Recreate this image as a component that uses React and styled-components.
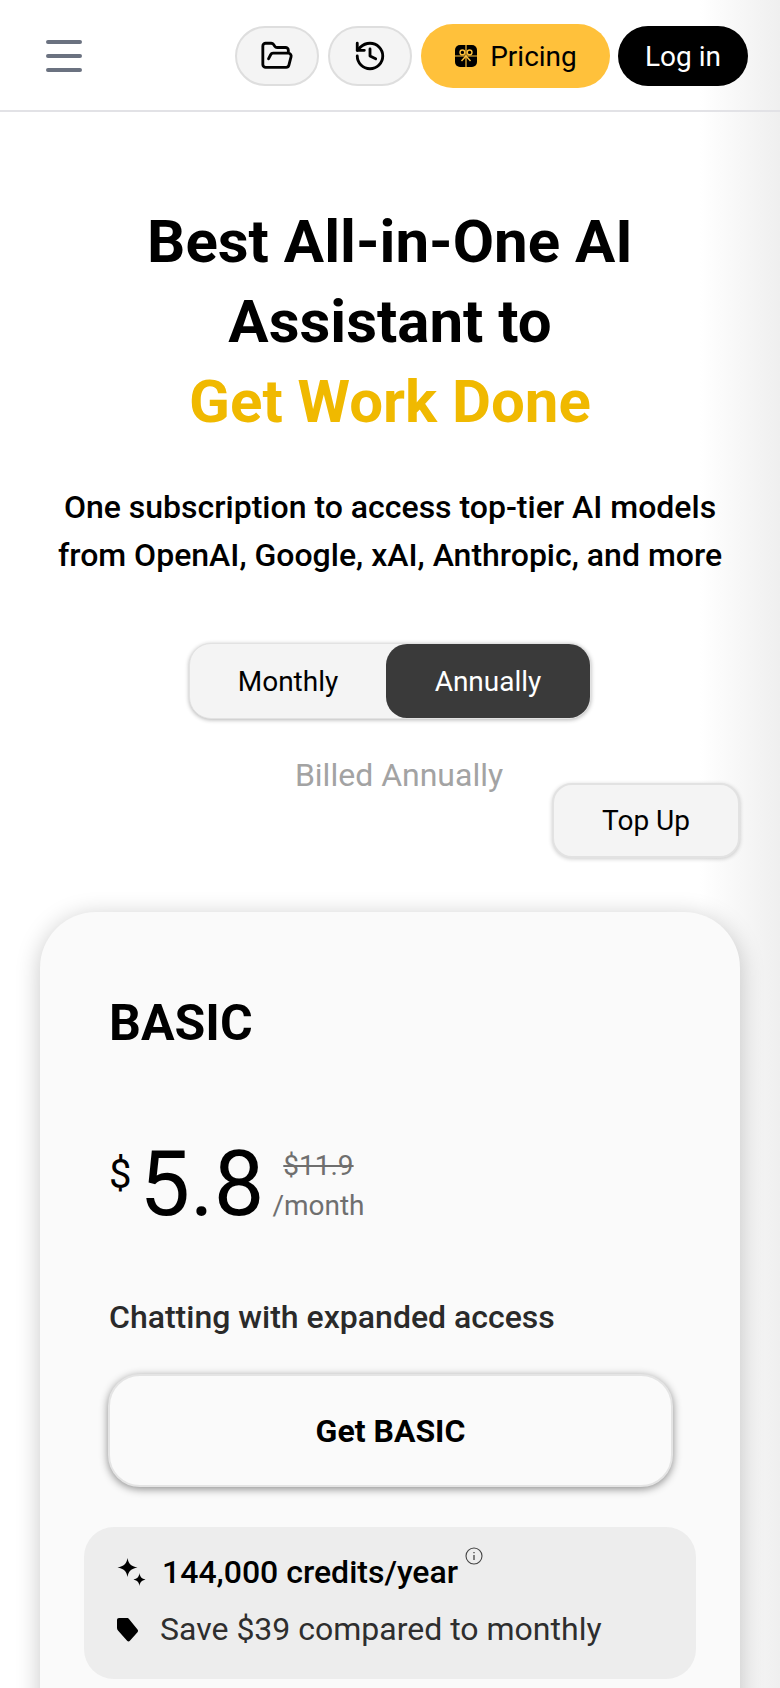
import React from "react";
import styled, { createGlobalStyle } from "styled-components";
import { FolderOpen, History } from "lucide-react";

const GlobalStyle = createGlobalStyle`
  * { box-sizing: border-box; }
  html, body { margin: 0; padding: 0; background: #fff; }
  body { font-family: Roboto, "Liberation Sans", sans-serif; color: #000; }
`;

function MenuIcon() {
  return (
    <svg width="36" height="32" viewBox="0 0 36 32" stroke="#6b7280" strokeWidth="4" strokeLinecap="round">
      <path d="M2 2h32M2 16h32M2 30h32" />
    </svg>
  );
}

function GiftIcon() {
  return (
    <svg width="24" height="24" viewBox="0 0 24 24">
      <rect x="1" y="1" width="22" height="22" rx="5" fill="#000" />
      <path d="M0 12h24M12 0v24" stroke="#ffc13b" strokeWidth="1.2" fill="none" />
      <circle cx="8.4" cy="8.4" r="2.400" fill="#000" stroke="#ffc13b" strokeWidth="1.4" />
      <circle cx="15.6" cy="8.4" r="2.400" fill="#000" stroke="#ffc13b" strokeWidth="1.4" />
      <path d="M12 12l-4.500 5M12 12l4.500 5" stroke="#ffc13b" strokeWidth="1.4" fill="none" />
    </svg>
  );
}

function SparkIcon() {
  return (
    <svg width="30" height="28" viewBox="0 0 30 28" fill="#000">
      <path d="M11.500 0c1 6 3.500 8.200 10 9.500c-6.500 1.300-9 3.500-10 9.500c-1-6-3.500-8.200-10-9.500C8 8.200 10.500 6 11.500 0z" />
      <path d="M23.500 15c.6 4 2 5.500 6 6.500c-4 1-5.400 2.500-6 6.500c-.6-4-2-5.500-6-6.500c4-1 5.400-2.500 6-6.500z" />
    </svg>
  );
}

function TagIcon() {
  return (
    <svg width="24" height="25" viewBox="0 0 24 25" fill="#000">
      <path d="M3 1h8c1 0 1.600.4 2.200 1.200l8.500 10.500c.5.7.5 1.500 0 2.200l-7.800 8.900c-.8.900-2 .9-2.800 0L2.200 13.700C1.500 12.900 1 12 1 11V3c0-1.200.8-2 2-2z" />
    </svg>
  );
}

function InfoIcon() {
  return (
    <svg width="18" height="18" viewBox="0 0 18 18" fill="none" stroke="#444">
      <circle cx="9" cy="9" r="8" strokeWidth="1.100" />
      <path d="M9 8v5M9 5v1.200" strokeWidth="1.300" />
    </svg>
  );
}

function App() {
  return (
    <Page>
      <GlobalStyle />
      <Header>
        <MenuIcon />
        <HeaderActions>
          <IconPill>
            <FolderOpen size={34} strokeWidth={2} />
          </IconPill>
          <IconPill>
            <History size={34} strokeWidth={2} />
          </IconPill>
          <PricingPill>
            <GiftIcon />
            Pricing
          </PricingPill>
          <LoginPill>Log in</LoginPill>
        </HeaderActions>
      </Header>

      <Hero>
        <Title>
          Best All-in-One AI
          <br />
          Assistant to
          <br />
          <Accent>Get Work Done</Accent>
        </Title>
        <Subtitle>
          One subscription to access top-tier AI models
          <br />
          from OpenAI, Google, xAI, Anthropic, and more
        </Subtitle>
        <Toggle>
          <ToggleOption>Monthly</ToggleOption>
          <ToggleOption $active>Annually</ToggleOption>
        </Toggle>
        <Billed>Billed Annually</Billed>
      </Hero>

      <TopUpRow>
        <TopUp>Top Up</TopUp>
      </TopUpRow>

      <Card>
        <PlanName>BASIC</PlanName>
        <PriceRow>
          <Currency>$</Currency>
          <Amount>5.8</Amount>
          <PriceNote>
            <OldPrice>$11.9</OldPrice>
            <Period>/month</Period>
          </PriceNote>
        </PriceRow>
        <PlanBlurb>Chatting with expanded access</PlanBlurb>
        <GetButton>Get BASIC</GetButton>
        <Perks>
          <PerkRow>
            <SparkIcon />
            <Credits>144,000 credits/year</Credits>
            <InfoMark>
              <InfoIcon />
            </InfoMark>
          </PerkRow>
          <PerkRow>
            <TagSlot>
              <TagIcon />
            </TagSlot>
            <Saving>Save $39 compared to monthly</Saving>
          </PerkRow>
        </Perks>
      </Card>
    </Page>
  );
}

// 페이지 (오른쪽 가장자리 그라데이션 포함)
const Page = styled.div`
  width: 780px;
  height: 1688px;
  overflow: hidden;
  background: linear-gradient(to right, #fff 0, #fff 700px, #efefef 780px);
`;

// 헤더
const Header = styled.header`
  height: 112px;
  display: flex;
  align-items: center;
  justify-content: space-between;
  padding: 2px 32px 0 46px;
  border-bottom: 2px solid #e2e2e6;
`;

const HeaderActions = styled.div`
  display: flex;
  align-items: center;
  gap: 9px;
`;

const IconPill = styled.div`
  width: 84px;
  height: 60px;
  display: flex;
  align-items: center;
  justify-content: center;
  border-radius: 30px;
  background: #f4f4f4;
  border: 2px solid #dedede;
`;

const PricingPill = styled.div`
  width: 189px;
  height: 64px;
  display: flex;
  align-items: center;
  justify-content: center;
  gap: 12px;
  border-radius: 32px;
  background: #ffc13b;
  font-size: 28px;
`;

const LoginPill = styled.div`
  width: 130px;
  height: 60px;
  margin-left: -1px;
  display: flex;
  align-items: center;
  justify-content: center;
  border-radius: 30px;
  background: #000;
  color: #fff;
  font-size: 28px;
`;

// 히어로
const Hero = styled.section`
  display: flex;
  flex-direction: column;
  align-items: center;
  text-align: center;
`;

const Title = styled.h1`
  margin: 90px 0 0;
  font-size: 60px;
  line-height: 80px;
  font-weight: 700;
`;

const Accent = styled.span`
  color: #f0b900;
`;

const Subtitle = styled.p`
  margin: 41px 0 0;
  font-size: 32px;
  line-height: 48px;
  font-weight: 500;
`;

const Toggle = styled.div`
  margin-top: 64px;
  width: 402px;
  height: 76px;
  display: flex;
  border-radius: 22px;
  background: #f4f4f4;
  border: 1px solid #e2e2e2;
  box-shadow: 0 1px 4px rgba(0, 0, 0, 0.3);
`;

const ToggleOption = styled.div`
  flex: ${(p) => (p.$active ? "0 0 204px" : "1")};
  display: flex;
  align-items: center;
  justify-content: center;
  border-radius: 21px;
  font-size: 28px;
  background: ${(p) => (p.$active ? "#3a3a3a" : "transparent")};
  color: ${(p) => (p.$active ? "#fff" : "#000")};
`;

const Billed = styled.div`
  margin-top: 36px;
  padding-left: 18px;
  font-size: 32px;
  line-height: 40px;
  color: #a3a3a3;
`;

const TopUpRow = styled.div`
  display: flex;
  justify-content: flex-end;
  margin-top: -12px;
  padding-right: 40px;
`;

const TopUp = styled.div`
  width: 188px;
  height: 75px;
  display: flex;
  align-items: center;
  justify-content: center;
  border-radius: 20px;
  background: #f4f4f4;
  border: 2px solid #e2e2e2;
  box-shadow: 0 1px 4px rgba(0, 0, 0, 0.2);
  font-size: 28px;
`;

// 요금 카드
const Card = styled.section`
  margin: 54px 40px 0;
  padding: 81px 42px 40px;
  height: 900px;
  border-radius: 56px;
  background: #fafafa;
  box-shadow: 0 4px 24px rgba(0, 0, 0, 0.22);
`;

const PlanName = styled.h2`
  margin: 0;
  padding-left: 27px;
  font-size: 50px;
  line-height: 60px;
  font-weight: 700;
`;

const PriceRow = styled.div`
  display: flex;
  align-items: flex-start;
  margin-top: 84px;
  padding-left: 27px;
`;

const Currency = styled.span`
  font-size: 40px;
  line-height: 48px;
  margin-top: 14px;
`;

const Amount = styled.span`
  margin-left: 8px;
  font-size: 90px;
  line-height: 96px;
`;

const PriceNote = styled.div`
  display: flex;
  flex-direction: column;
  align-items: center;
  margin-left: 8px;
  margin-top: 9px;
  color: #6f6f6f;
  font-size: 28px;
  line-height: 40px;
`;

const OldPrice = styled.span`
  text-decoration: line-through;
`;

const Period = styled.span``;

const PlanBlurb = styled.div`
  margin-top: 64px;
  padding-left: 27px;
  font-size: 32px;
  line-height: 40px;
  font-weight: 500;
  color: #2a2a2a;
`;

const GetButton = styled.div`
  margin: 37px 0 0 26px;
  width: 565px;
  height: 113px;
  display: flex;
  align-items: center;
  justify-content: center;
  border-radius: 32px;
  background: #fafafa;
  border: 2px solid #e4e4e4;
  box-shadow: 0 2px 8px rgba(0, 0, 0, 0.45);
  font-size: 32px;
  font-weight: 700;
`;

const Perks = styled.div`
  margin-top: 40px;
  margin-left: 2px;
  width: 612px;
  height: 152px;
  padding: 24px 32px;
  display: flex;
  flex-direction: column;
  gap: 15px;
  border-radius: 30px;
  background: #ededed;
`;

const PerkRow = styled.div`
  display: flex;
  align-items: center;
  gap: 14px;
  height: 42px;
`;

const TagSlot = styled.div`
  width: 30px;
  display: flex;
`;

const Credits = styled.span`
  margin-left: 2px;
  font-size: 32px;
  font-weight: 500;
`;

const InfoMark = styled.span`
  display: flex;
  margin: -32px 0 0 -7px;
`;

const Saving = styled.span`
  font-size: 32px;
  color: #2e2e2e;
`;

export default App;
